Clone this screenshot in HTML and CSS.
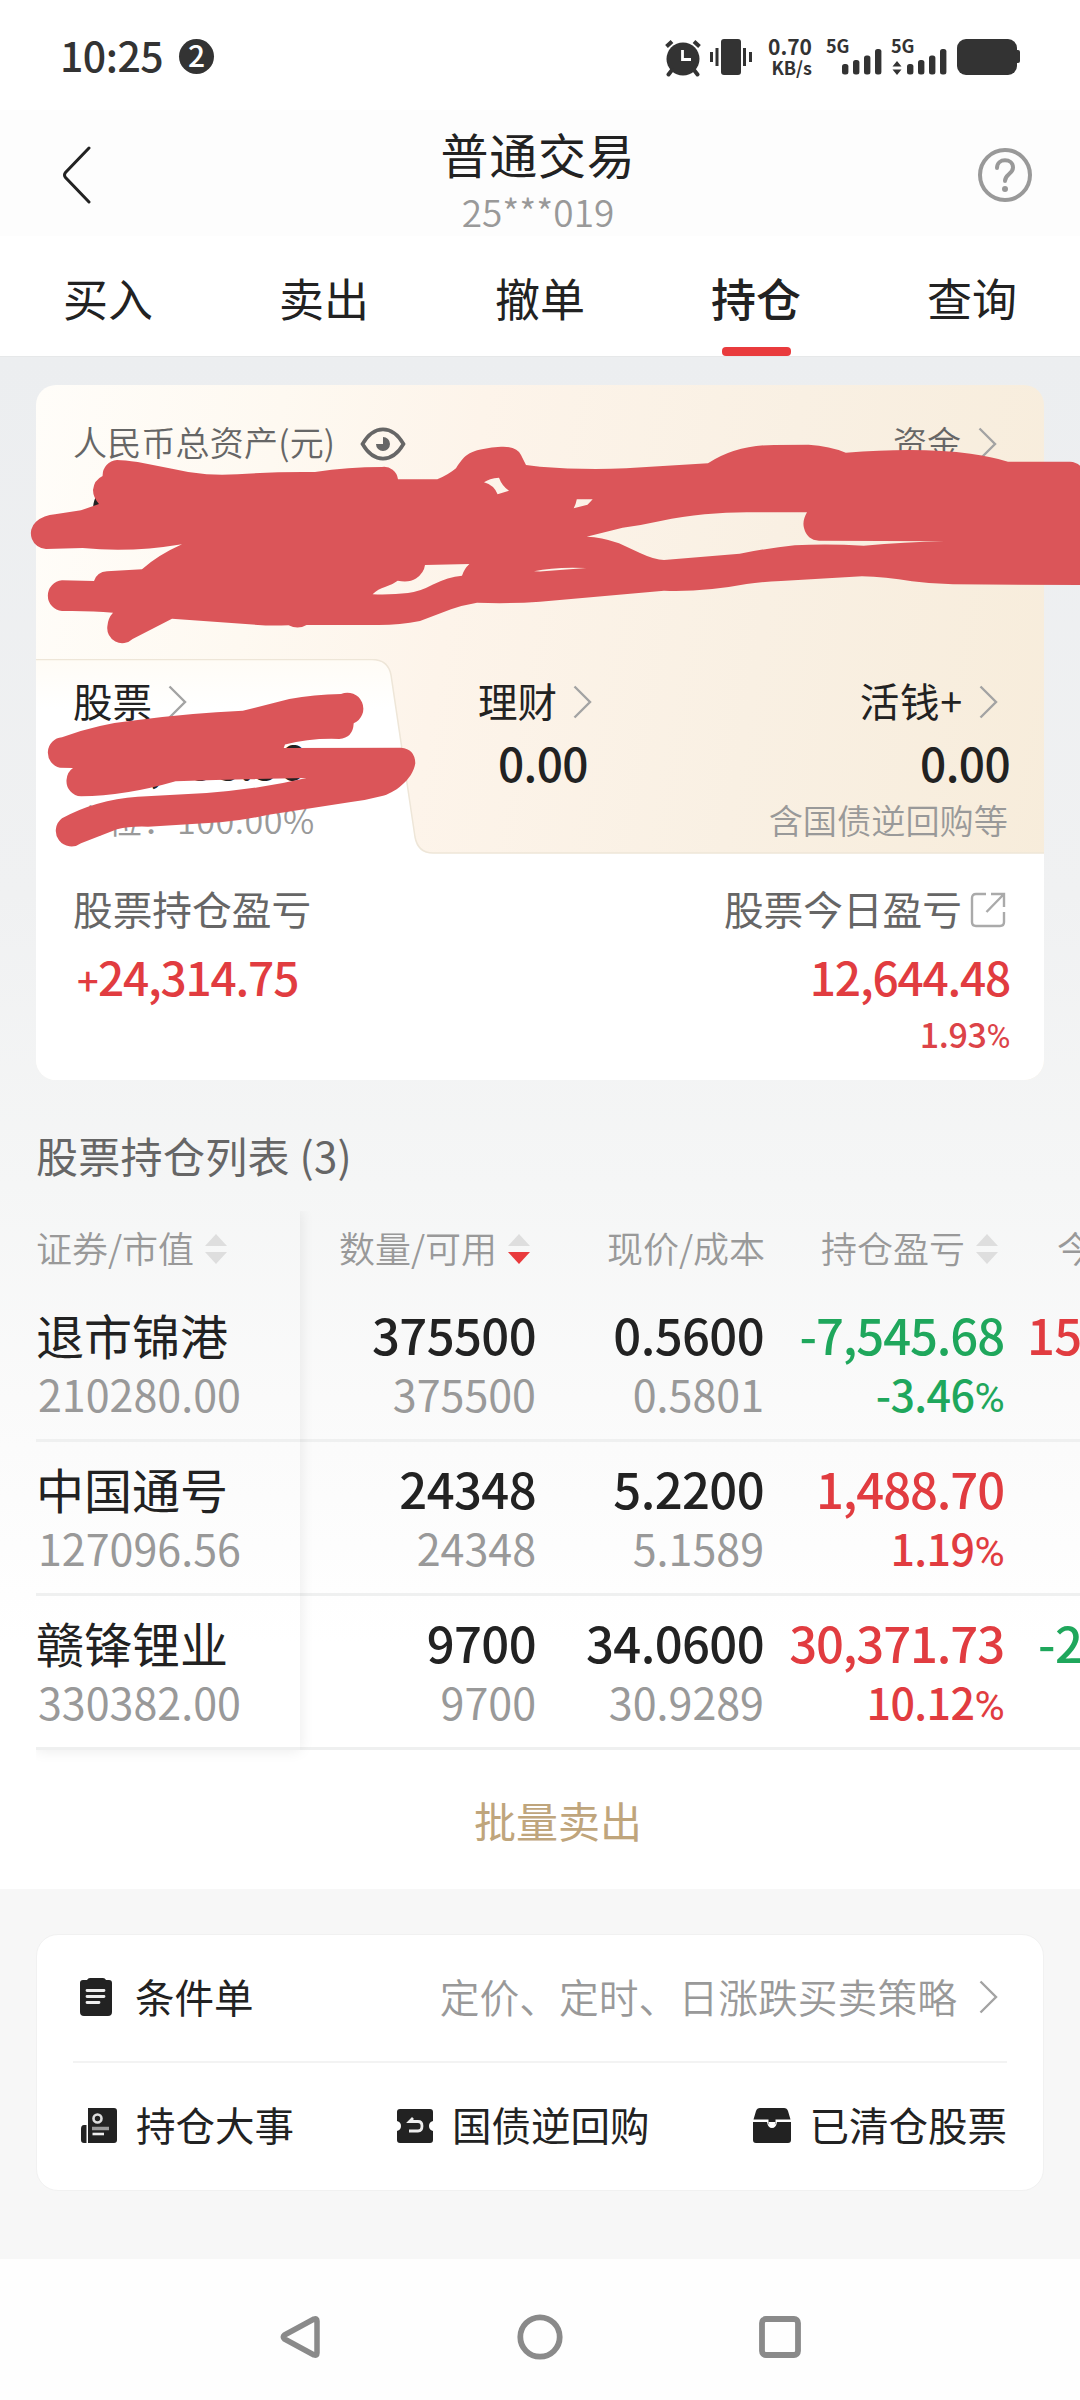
FILE: index.html
```html
<!DOCTYPE html>
<html lang="zh-CN">
<head>
    <meta charset="UTF-8">
    <meta name="viewport" content="width=device-width, initial-scale=1.0">
    <title>普通交易</title>
    <link rel="stylesheet" href="styles.css">
</head>
<body>
    <svg class="defs" width="0" height="0">
        <symbol id="arrow" viewBox="0 0 19 34"><path d="M1.5 1.5 L17 17 L1.5 32.5" fill="none" stroke="#a3a3a3" stroke-width="2.4"/></symbol>
        <symbol id="bars" viewBox="0 0 40 26">
            <rect x="0" y="15" width="6.4" height="10.5" rx="2.5"/><rect x="11" y="11" width="6.4" height="14.5" rx="2.5"/>
            <rect x="22" y="6.5" width="6.4" height="19" rx="2.5"/><rect x="33" y="0" width="6.4" height="25.5" rx="2.5"/>
        </symbol>
    </svg>
    <div class="wrap">
        <div class="status">
            <span class="time">10:25</span>
            <span class="notice">2</span>
            <div class="status-icons">
                <svg class="alarm" width="38" height="38" viewBox="0 0 38 38">
                    <circle cx="19" cy="20" r="16.5" fill="#333"/>
                    <path d="M2.5 7.5 L8 2.5 M35.5 7.5 L30 2.5" stroke="#333" stroke-width="4"/>
                    <path d="M8 31 L4.500 35.500 M30 31 L33.500 35.500" stroke="#333" stroke-width="4" stroke-linecap="round"/>
                    <path d="M18.500 11 V20.500 H27" fill="none" stroke="#fff" stroke-width="2.8"/>
                </svg>
                <svg class="vibrate" width="42" height="36" viewBox="0 0 42 36" fill="#333">
                    <rect x="11" y="0" width="20" height="36" rx="3"/>
                    <rect x="0" y="13" width="3" height="10"/><rect x="5.500" y="9" width="3" height="18"/>
                    <rect x="33" y="9" width="3" height="18"/><rect x="39" y="13" width="3" height="10"/>
                </svg>
                <div class="speed"><span>0.70</span><span class="unit">KB/s</span></div>
                <div class="signal">
                    <span>5G</span>
                    <svg width="40" height="26"><use href="#bars"/></svg>
                </div>
                <div class="signal">
                    <span>5G</span>
                    <div class="signal-row">
                        <svg class="updown" width="10" height="14" viewBox="0 0 10 14"><path d="M5 0 L9.500 5.500 H.5Z M5 14 L9.500 8.500 H.5Z"/></svg>
                        <svg width="40" height="26"><use href="#bars"/></svg>
                    </div>
                </div>
                <svg class="battery" width="64" height="36" viewBox="0 0 64 36" fill="#333">
                    <rect x="0" y="0" width="60" height="36" rx="9"/><rect x="57" y="11" width="6" height="13" rx="2"/>
                </svg>
            </div>
        </div><!--status-->

        <div class="header">
            <svg class="back" width="30" height="58" viewBox="0 0 30 58"><path d="M27 2 L3.500 26.500 Q1.500 29 3.500 31.500 L27 56" fill="none" stroke="#222" stroke-width="3" stroke-linecap="round"/></svg>
            <div class="header-title">
                <h1>普通交易</h1>
                <p>25***019</p>
            </div>
            <svg class="help" width="56" height="56" viewBox="0 0 56 56" fill="none" stroke="#999" stroke-width="4">
                <circle cx="28" cy="28" r="25"/>
                <path d="M20 21 C20 10.500 36 11 36 20.500 C36 27 28 27 28 34" stroke-linecap="round"/>
                <circle cx="28" cy="42" r="3" fill="#999" stroke="none"/>
            </svg>
        </div><!--header-->

        <ul class="tabs">
            <li>买入</li>
            <li>卖出</li>
            <li>撤单</li>
            <li class="on">持仓</li>
            <li>查询</li>
        </ul>

        <div class="content">
            <div class="asset">
                <div class="asset-total">
                    <div class="total-head">
                        <span class="total-name">人民币总资产(元)</span>
                        <svg class="eye" width="46" height="34" viewBox="0 0 46 34">
                            <path d="M2.500 17 C14 -2.500 32 -2.500 43.500 17 C32 36.500 14 36.500 2.500 17Z" fill="none" stroke="#666" stroke-width="3.600"/>
                            <path d="M23 10 A7 7 0 1 1 16 17 H23Z" fill="#666"/>
                        </svg>
                        <span class="fund">资金</span>
                        <svg width="19" height="34"><use href="#arrow"/></svg>
                    </div>
                    <strong class="total-num">667,758.56</strong>
                </div>

                <div class="asset-kind">
                    <svg class="kind-bg" width="1008" height="196" viewBox="0 0 1008 196">
                        <defs><linearGradient id="fade" x1="0" y1="0" x2="0" y2="1"><stop offset="0" stop-color="#fffcf6"/><stop offset=".25" stop-color="#fff"/></linearGradient></defs>
                        <path d="M0 1 H336 Q352 1 355 16 L379 178 Q382 194 397 194 H1008 V196 H0Z" fill="url(#fade)"/>
                        <path d="M0 .5 H336 Q352 .5 355 16 L379 178 Q382 194 397 194 H1008" fill="none" stroke="#eee6d8" stroke-width="1.500"/>
                    </svg>
                    <div class="kind stock">
                        <div class="kind-name">股票<svg width="19" height="34"><use href="#arrow"/></svg></div>
                        <strong>667,758.56</strong>
                        <p>仓位：100.00%</p>
                    </div>
                    <div class="kind money">
                        <div class="kind-name">理财<svg width="19" height="34"><use href="#arrow"/></svg></div>
                        <strong>0.00</strong>
                    </div>
                    <div class="kind cash">
                        <div class="kind-name">活钱+<svg width="19" height="34"><use href="#arrow"/></svg></div>
                        <strong>0.00</strong>
                        <p>含国债逆回购等</p>
                    </div>
                </div>

                <div class="profit">
                    <div class="profit-hold">
                        <div class="profit-name">股票持仓盈亏</div>
                        <strong><span class="plus">+</span>24,314.75</strong>
                    </div>
                    <div class="profit-today">
                        <div class="profit-name">股票今日盈亏<svg width="36" height="36" viewBox="0 0 36 36" fill="none" stroke="#aaa" stroke-width="2.400"><path d="M16 2 H6 Q2 2 2 6 V30 Q2 34 6 34 H30 Q34 34 34 30 V20 M21 2 H34 V15 M34 2 L16.500 20"/></svg></div>
                        <strong>12,644.48</strong>
                        <em>1.93<i>%</i></em>
                    </div>
                </div>

                <svg class="scrawl" width="1080" height="420" viewBox="0 440 1080 420">
                    <path fill-rule="evenodd" d="M102.600 476 A15.500 15.500 0 0 1 117 460 Q124 460 137.700 462 L172 468.700 Q190 473 206.600 474.300 Q222 475 237.600 474.300 Q275 471.500 315 472 Q348 467 382 467 A14 14 0 0 1 398 479.300 L437.300 479.300 Q448 475 456 468.300 C464 456 468 452 482 449.300 Q492 446.700 501 446.700 Q517 446 521 455 L526 465 L540 466.700 Q581 470 626 468.300 L708 463.300 Q736 445 774 445 L808.600 444.700 Q830 446 845.800 452.700 Q920 447 970.500 453.700 Q994 457 1008 461.700 L1070 461.700 Q1076 462 1080 465.700 V585 L953 584.300 Q932 584 912 581.300 Q885 577 862 576.300 L781 581 Q760 582 746.600 584 Q705 592 664 590.700 L540 601.700 Q508 604 477 602.700 Q463 605 451 609.300 L420 621 Q400 625 378.800 625 L306.500 625 Q298 630 288.600 625.300 Q270 626 258 625 L172 618.700 L132.600 639 A15 15 0 0 1 107.400 626 Q108 618 113 612.700 Q90 610.500 62 611 A15.400 15.400 0 0 1 62 580.300 L94 581 Q97 572 107 571.300 L142 569.300 Q158 555 182 544.300 Q130 553 82.600 548 L46 549 A15.700 15.700 0 0 1 36 521.700 Q44 515 55 514.300 L81 510.300 L99 504 Q93 497 93 490 Q94 480 102.600 476Z
                        M484 482.300 Q489 478.500 499 477.700 Q502 486 509 490.700 L497.600 494.300 Q494 485 484 482.300Z
                        M372.600 594.300 Q378 589 385 587 Q392 585 397.700 580.700 Q409 583 416 578.500 Q424 573 425 565 L469.400 564 Q464 569 462 575.700 Q448 577 433 584.500 Q419 592 408 593 Q392 595 372.600 594.300Z
                        M573.700 508.300 Q576 504 576.800 499.300 L592.700 499.300 L587.500 504.700Z
                        M586.500 536.700 L622.600 527.700 Q643 525 660.500 521 C690 515 720 512.300 746.600 512.300 L807 512.300 Q802 521 804 528 Q807 540 819 540.700 L944.600 541.300 Q905 542 863.700 545.700 Q827 543.500 794.800 545.300 Q768 548 739.700 553.700 L664 560 Q655 560 640 553 L619 543.300 Q600 536.500 586.500 536.700Z
                        M534 571.300 Q555 566.500 586.500 568 L540 571.500Z"/>
                    <path d="M62 737.300 Q97 724 137.700 720 Q190 713 242.800 710.700 L289.300 699 Q314 694.500 341 694 A15.800 15.800 0 0 1 353.700 723.300 Q353 738 339.200 739 Q310 738 285 744.500 L283.700 748 L401 747.700 Q415 749 415.300 763.300 C413 780 393 794 382 796 Q367 800 351 802 L268.600 814.700 Q243 820.500 220.400 822.300 L148 826.700 Q130 826 117 829.300 L81 843.300 A15.400 15.400 0 1 1 62 818.300 Q95 800 137.700 796.700 L206.600 793 Q260 789 306.500 778 Q240 779 175.600 781.300 Q125 796 81 796.300 A15.300 15.300 0 0 1 66.500 780 Q67 772 73 768 L60 767.700 A15.400 15.400 0 0 1 62 737.300Z"/>
                </svg>
            </div><!--asset-->

            <h2 class="list-title">股票持仓列表 (3)</h2>

            <div class="holdings">
                <div class="fixed">
                    <div class="th">证券/市值<span class="sort"></span></div>
                    <div class="row"><b>退市锦港</b><span>210280.00</span></div>
                    <div class="row"><b>中国通号</b><span>127096.56</span></div>
                    <div class="row"><b>赣锋锂业</b><span>330382.00</span></div>
                </div>
                <div class="col amount">
                    <div class="th">数量/可用<span class="sort down"></span></div>
                    <div class="row"><strong>375500</strong><span>375500</span></div>
                    <div class="row"><strong>24348</strong><span>24348</span></div>
                    <div class="row"><strong>9700</strong><span>9700</span></div>
                </div>
                <div class="col price">
                    <div class="th">现价/成本</div>
                    <div class="row"><strong>0.5600</strong><span>0.5801</span></div>
                    <div class="row"><strong>5.2200</strong><span>5.1589</span></div>
                    <div class="row"><strong>34.0600</strong><span>30.9289</span></div>
                </div>
                <div class="col gain">
                    <div class="th">持仓盈亏<span class="sort"></span></div>
                    <div class="row green"><strong>-7,545.68</strong><em>-3.46<i>%</i></em></div>
                    <div class="row red"><strong>1,488.70</strong><em>1.19<i>%</i></em></div>
                    <div class="row red"><strong>30,371.73</strong><em>10.12<i>%</i></em></div>
                </div>
                <div class="col today">
                    <div class="th">今</div>
                    <div class="row red"><strong>15</strong></div>
                    <div class="row"></div>
                    <div class="row green"><strong class="minus">-2</strong></div>
                </div>
            </div><!--holdings-->

            <div class="batch">批量卖出</div>
        </div><!--content-->

        <div class="tools">
            <div class="tools-box">
                <div class="tool-row">
                    <svg width="34" height="40" viewBox="0 0 34 40"><path d="M4 3 H8 Q9 1 11 1 H24 Q26 1 27 3 H30 Q33 3 33 6 V35 Q33 39 29 39 H5 Q1 39 1 35 V6 Q1 3 4 3Z" fill="#222"/><path d="M8 13.500 H25 M8 19.500 H25 M8 25.500 H20" stroke="#eee" stroke-width="2.800" stroke-linecap="round"/></svg>
                    <span class="tool-name">条件单</span>
                    <span class="tool-desc">定价、定时、日涨跌买卖策略</span>
                    <svg class="go" width="19" height="34"><use href="#arrow"/></svg>
                </div>
                <div class="tool-row second">
                    <div class="tool">
                        <svg width="38" height="38" viewBox="0 0 38 38"><path d="M8 1 H34 Q37 1 37 4 V33 Q37 36 34 36 H8Z M6.500 18 V36 H4 Q1 36 1 33 V22 Q1 18 4 18Z" fill="#222"/><circle cx="17.500" cy="11.500" r="4" fill="none" stroke="#ddd" stroke-width="2.600"/><path d="M12 21.500 H29" stroke="#999" stroke-width="3.500"/><path d="M12.500 27 H24" stroke="#eee" stroke-width="2.600"/></svg>
                        <span>持仓大事</span>
                    </div>
                    <div class="tool">
                        <svg width="38" height="38" viewBox="0 0 38 38"><path d="M4 2 H34 Q37 2 37 5 V14 Q33 15 33 19 Q33 23 37 24 V33 Q37 36 34 36 H4 Q1 36 1 33 V24 Q5 23 5 19 Q5 15 1 14 V5 Q1 2 4 2Z" fill="#222"/><path d="M17 11 L13.500 14.500 H22 Q26 14.500 26 19 Q26 24 22 24 H13" fill="none" stroke="#eee" stroke-width="2.800"/></svg>
                        <span>国债逆回购</span>
                    </div>
                    <div class="tool">
                        <svg width="40" height="38" viewBox="0 0 40 38"><path d="M8 1 H32 Q35 1 36 4 L38.500 12.500 H1.500 L4 4 Q5 1 8 1Z M1 15 H15 Q16 21 20 21 Q24 21 25 15 H39 V33 Q39 36 36 36 H4 Q1 36 1 33Z" fill="#222"/><path d="M16.500 12 H23.500 V17 Q20 20 16.500 17Z" fill="#222"/><path d="M16.500 15 H23.500 Q23 20 20 20 Q17 20 16.500 15Z" fill="#fff"/></svg>
                        <span>已清仓股票</span>
                    </div>
                </div>
            </div>
        </div><!--tools-->

        <div class="navbar">
            <svg width="44" height="48" viewBox="0 0 44 48"><path d="M36 6 Q39 5 39 8 V40 Q39 43 36 42 L6.500 26 Q4 24 6.500 22Z" fill="none" stroke="#8a8a8a" stroke-width="5.500" stroke-linejoin="round"/></svg>
            <svg width="48" height="48" viewBox="0 0 48 48"><circle cx="24" cy="24" r="19.700" fill="none" stroke="#8a8a8a" stroke-width="5.800"/></svg>
            <svg width="44" height="48" viewBox="0 0 44 48"><rect x="4" y="6" width="36" height="36" rx="4" fill="none" stroke="#8a8a8a" stroke-width="5.800"/></svg>
        </div>
    </div><!--wrap-->
</body>
</html>
```

FILE: styles.css
```css
*{
    margin: 0;
    padding: 0;
    box-sizing: border-box;
}
body{
    width: 1080px;
    font-family: "Noto Sans CJK SC", sans-serif;
    color: #222;
    background-color: #fff;
}
ul{
    list-style: none;
}
svg{
    display: block;
    flex-shrink: 0;
}
em, i{
    font-style: normal;
}
strong{
    font-weight: 500;
}
.defs{
    position: absolute;
}
.wrap{
    width: 1080px;
    height: 2400px;
    overflow: hidden;
}

/* 状态栏 */
.status{
    display: flex;
    height: 110px;
    padding: 0 60px;
    color: #333;
}
.time{
    font-size: 41px;
    font-weight: 500;
    line-height: 60px;
    margin-top: 24px;
    width: 119px;
    letter-spacing: -.5px;
}
.notice{
    width: 35px;
    height: 35px;
    margin-top: 39px;
    border-radius: 50%;
    background-color: #333;
    color: #fff;
    font-size: 30px;
    font-weight: 500;
    line-height: 31px;
    text-align: center;
}
.status-icons{
    display: flex;
    align-items: flex-start;
    margin-left: auto;
    padding-top: 39px;
    margin-right: -1px;
}
.status-icons svg{
    fill: #333;
}
.alarm{
    margin-right: 8px;
}
.speed{
    display: flex;
    flex-direction: column;
    width: 46px;
    margin: -3px 0 0 14px;
    font-size: 21px;
    font-weight: bold;
    line-height: 20px;
    text-align: right;
}
.speed .unit{
    font-size: 18px;
    line-height: 23px;
}
.signal{
    position: relative;
    display: flex;
    flex-direction: column;
    align-items: flex-end;
    margin-left: 14px;
    width: 56px;
    height: 36px;
    justify-content: flex-end;
}
.signal + .signal{
    margin-left: 9px;
}
.signal span{
    position: absolute;
    left: 0;
    top: -6px;
    font-size: 18px;
    font-weight: bold;
    line-height: 24px;
}
.signal-row{
    display: flex;
    align-items: flex-end;
    gap: 5px;
}
.battery{
    margin-left: 10px;
}

/* 标题 */
.header{
    display: flex;
    justify-content: space-between;
    height: 126px;
    padding: 0 47px 0 62px;
    background-color: #fdfdfd;
}
.back{
    margin-top: 36px;
    margin-right: -3px;
}
.header-title{
    padding-top: 16px;
    text-align: center;
    margin-left: 10px;
}
.header-title h1{
    font-size: 48px;
    font-weight: 400;
    line-height: 54px;
    letter-spacing: .8px;
}
.header-title p{
    font-size: 37px;
    font-weight: 350;
    line-height: 46px;
    margin-top: 8px;
    color: #999;
}
.help{
    margin-top: 37px;
}

.tabs{
    display: flex;
    height: 120px;
}
.tabs li{
    display: flex;
    flex-direction: column;
    align-items: center;
    flex: 1;
    padding-top: 32px;
    font-size: 45px;
    line-height: 60px;
}
.tabs .on{
    font-weight: 500;
}
.tabs .on::after{
    content: "";
    width: 69px;
    height: 9px;
    margin-top: 19px;
    border-radius: 4px;
    background-color: #e93b3d;
}

.content{
    height: 1533px;
    padding-top: 29px;
    border-top: 1px solid #e6e8e9;
    background: linear-gradient(#eceef0 0, #f0f1f2 35%, #f5f6f6 54%, #fafafa 68%, #fff 84%);
}

/* 资产卡片 */
.asset{
    position: relative;
    height: 695px;
    margin: -1px 36px 0;
    border-radius: 20px;
    background: linear-gradient(100deg, #fffdf9 0, #fef9f1 22%, #fdf4ea 40%, #f9f0e3 68%, #f7ecda 100%);
}
.asset-total{
    height: 274px;
    padding: 32px 38px 0;
}
.total-head{
    display: flex;
    align-items: center;
    height: 48px;
    font-size: 34px;
    font-weight: 350;
    color: #666;
    padding-right: 9px;
}
.total-head svg{
    margin-top: 5px;
}
.total-name{
    margin-left: -1px;
    letter-spacing: .2px;
}
.eye{
    margin-left: 25px;
}
.fund{
    margin-left: auto;
    margin-right: 17px;
}
.total-num{
    display: block;
    padding-left: 16px;
    font-size: 56px;
    line-height: 84px;
}
.asset-kind{
    position: relative;
    display: flex;
    height: 194px;
    padding: 16px 36px 0 37px;
}
.kind-bg{
    position: absolute;
    left: 0;
    top: 0;
}
.kind{
    position: relative;
}
.stock{
    width: 405px;
}
.cash{
    display: flex;
    flex-direction: column;
    align-items: flex-end;
    margin-left: auto;
}
.kind-name{
    display: flex;
    align-items: center;
    font-size: 39.5px;
    line-height: 50px;
}
.kind-name svg{
    margin: 4px 0 0 16px;
}
.cash .kind-name{
    padding-right: 10px;
    letter-spacing: .8px;
}
.kind strong{
    display: block;
    margin-top: 9px;
    font-size: 46px;
    line-height: 56px;
    letter-spacing: -.6px;
}
.stock strong{
    position: relative;
    top: -2px;
}
.money strong{
    padding-left: 20px;
}
.cash strong{
    margin-right: -2px;
}
.kind p{
    margin-top: 7px;
    font-size: 34.2px;
    font-weight: 350;
    line-height: 44px;
    color: #999;
}
.stock p{
    letter-spacing: .5px;
}
.profit{
    display: flex;
    justify-content: space-between;
    height: 227px;
    padding: 30px 34px 0 37px;
    border-radius: 0 0 20px 20px;
    background-color: #fff;
}
.profit-name{
    display: flex;
    align-items: center;
    font-size: 39.7px;
    line-height: 50px;
    color: #666;
}
.profit-name svg{
    margin: 3px 4px 0 8px;
}
.profit strong{
    display: block;
    margin-top: 15px;
    font-size: 46px;
    letter-spacing: -1.2px;
    line-height: 56px;
    color: #e13c40;
}
.plus{
    display: inline-block;
    width: 21px;
    margin-left: 4px;
    font-size: 38px;
}
.profit-today{
    display: flex;
    flex-direction: column;
    align-items: flex-end;
}
.profit em{
    margin-top: 10px;
    font-size: 34px;
    font-weight: 500;
    line-height: 40px;
    letter-spacing: -.4px;
    color: #dc4348;
}
em i{
    font-family: Roboto, sans-serif;
    font-weight: 400;
    font-size: .96em;
}
/* 涂抹遮挡 */
.scrawl{
    position: absolute;
    left: -36px;
    top: 55px;
    fill: #db5559;
}

/* 持仓列表 */
.list-title{
    margin: 45px 36px 0;
    font-size: 42px;
    font-weight: 400;
    line-height: 60px;
    letter-spacing: .3px;
    color: #666;
}
.holdings{
    display: flex;
    margin-top: 26px;
    padding-left: 36px;
    overflow: hidden;
    padding-bottom: 20px;
}
.fixed{
    width: 264px;
    flex-shrink: 0;
    box-shadow: 0 0 14px rgba(0, 0, 0, .09);
    clip-path: inset(0 -16px -16px 0);
}
.col{
    flex-shrink: 0;
}
.amount{
    width: 236px;
}
.price{
    width: 228px;
}
.gain{
    width: 240px;
}
.today{
    width: 100px;
}
.th{
    display: flex;
    align-items: center;
    height: 77px;
    padding-bottom: 5px;
    font-size: 36px;
    font-weight: 350;
    color: #999;
}
.col .th{
    justify-content: flex-end;
    padding-right: 6px;
}
.price .th{
    padding-right: 0;
    margin-right: -1px;
}
.today .th{
    justify-content: flex-start;
    padding-left: 53px;
}
.sort{
    display: flex;
    flex-direction: column;
    gap: 6px;
    margin: 4px 0 0 11px;
}
.sort::before,
.sort::after{
    content: "";
    border: 11px solid transparent;
    border-top-width: 0;
    border-bottom: 12px solid #dedede;
}
.sort::after{
    border-bottom-width: 0;
    border-top: 12px solid #dedede;
}
.sort.down::after{
    border-top-color: #e93b3d;
}
.row{
    display: flex;
    flex-direction: column;
    height: 154px;
    padding-top: 16px;
    border-bottom: 3px solid #eff0f0;
}
.col .row{
    align-items: flex-end;
}
.row b,
.row strong{
    font-size: 48px;
    line-height: 60px;
    font-weight: 400;
}
.row strong{
    font-size: 49px;
    font-weight: 500;
    letter-spacing: -.6px;
}
.gain .row strong{
    letter-spacing: -1.1px;
}
.row span,
.row em{
    margin-top: 4px;
    font-size: 43px;
    line-height: 50px;
    color: #999;
}
.fixed .row span{
    padding-left: 2px;
}
.row em{
    font-weight: 500;
    letter-spacing: -.6px;
    color: inherit;
}
.today .row{
    align-items: flex-start;
    padding-left: 23px;
}
.today .minus{
    padding-left: 11px;
}
.red{
    color: #e13c40;
}
.green{
    color: #1fa75c;
}
.batch{
    margin-top: 20px;
    padding-left: 36px;
    font-size: 42px;
    line-height: 60px;
    text-align: center;
    color: #bfa57c;
}

/* 底部工具 */
.tools{
    height: 370px;
    padding: 45px 36px 0;
    background-color: #f7f7f7;
}
.tools-box{
    height: 257px;
    padding: 0 36px;
    border: 1px solid #f1f1f1;
    border-radius: 22px;
    background-color: #fff;
}
.tool-row{
    display: flex;
    align-items: center;
    height: 126px;
    padding: 0 9px 6px 6px;
    font-size: 39.5px;
}
.tool-row svg{
    margin-top: 4px;
}
.tool-name{
    margin-left: 22px;
}
.tool-desc{
    margin: 0 22px 0 auto;
    font-size: 39.8px;
    font-weight: 350;
    color: #999;
}
.second{
    justify-content: space-between;
    border-top: 2px solid #f3f3f3;
    padding: 0 0 3px 7px;
}
.tool{
    display: flex;
    align-items: center;
    gap: 18px;
}

.navbar{
    display: flex;
    justify-content: center;
    align-items: center;
    gap: 194px;
    height: 141px;
    padding-top: 15px;
    background-color: #fefefe;
}
```
